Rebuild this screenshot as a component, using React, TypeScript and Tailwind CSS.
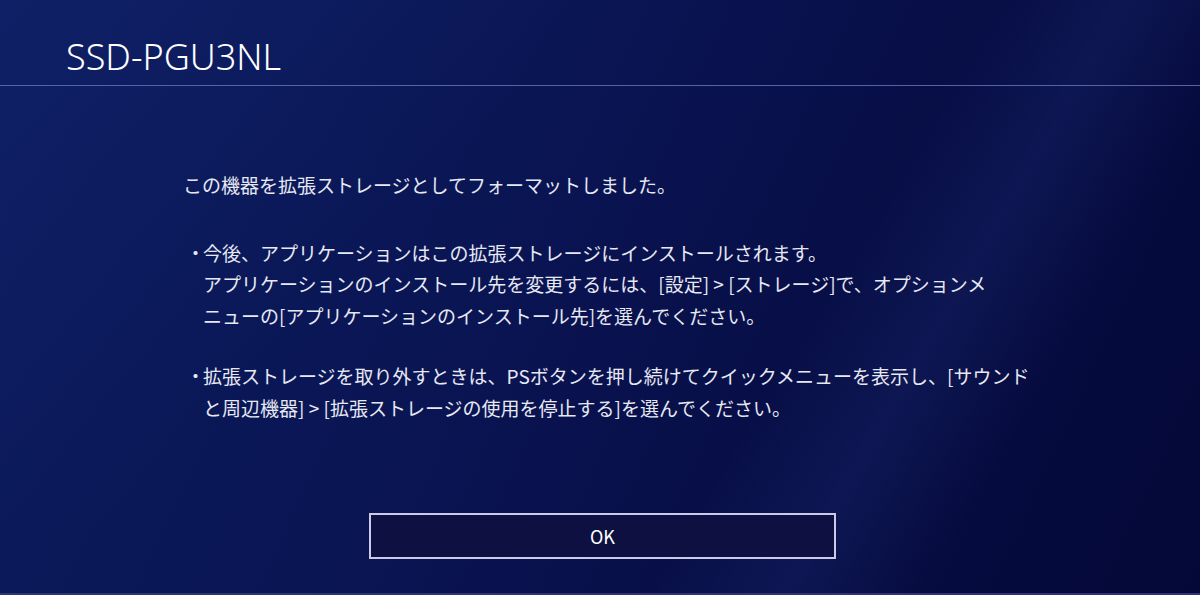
const jp = { fontFamily: '"Noto Sans CJK JP", "Noto Sans", sans-serif' };

function Bullet({ lines }: { lines: string[] }) {
  return (
    <div className="flex">
      <span className="w-[20px] shrink-0 pl-[3px]">・</span>
      <div>
        {lines.map((l, i) => (
          <div key={i} className="whitespace-nowrap">{l}</div>
        ))}
      </div>
    </div>
  );
}

export default function App() {
  return (
    <div
      className="relative h-[595px] w-[1200px] overflow-hidden bg-[linear-gradient(115deg,#0b1a5c_0%,#0a1858_25%,#0a1452_45%,#070d44_70%,#040838_100%)] text-[#e6e8f2]"
      style={jp}
    >
      {/* soft diagonal light bands */}
      <div className="pointer-events-none absolute inset-0 bg-[linear-gradient(120deg,transparent_0%,transparent_64%,rgba(40,60,140,0.22)_73%,transparent_82%)]" />
      <div className="pointer-events-none absolute inset-0 bg-[linear-gradient(135deg,rgba(30,50,130,0.25)_0%,transparent_35%)]" />

      <div className="relative flex h-full flex-col">
        <header className="flex h-[85px] items-end pb-[10px] pl-[66px]">
          <h1
            className="text-[36px] font-light leading-none text-white"
            style={{ fontFamily: '"Noto Sans", "Open Sans", sans-serif' }}
          >
            SSD-PGU3NL
          </h1>
        </header>
        <div className="h-px w-full bg-[#5663a4]" />

        <main className="flex-1 pl-[183px] pt-[83px] text-[19px] leading-[31.5px]">
          <p className="whitespace-nowrap">この機器を拡張ストレージとしてフォーマットしました。</p>

          <div className="mt-[36px]">
            <Bullet
              lines={[
                '今後、アプリケーションはこの拡張ストレージにインストールされます。',
                'アプリケーションのインストール先を変更するには、[設定] > [ストレージ]で、オプションメ',
                'ニューの[アプリケーションのインストール先]を選んでください。',
              ]}
            />
          </div>

          <div className="mt-[29px]">
            <Bullet
              lines={[
                '拡張ストレージを取り外すときは、PSボタンを押し続けてクイックメニューを表示し、[サウンド',
                'と周辺機器] > [拡張ストレージの使用を停止する]を選んでください。',
              ]}
            />
          </div>
        </main>

        <div className="flex justify-start pb-[34px] pl-[369px]">
          <button className="flex h-[46px] w-[467px] items-center justify-center border-2 border-[#c9cce8] bg-[#0d1040] text-[18px] font-normal text-white">
            OK
          </button>
        </div>
        <div className="h-[2px] w-full bg-[#2c3474]" />
      </div>
    </div>
  );
}
